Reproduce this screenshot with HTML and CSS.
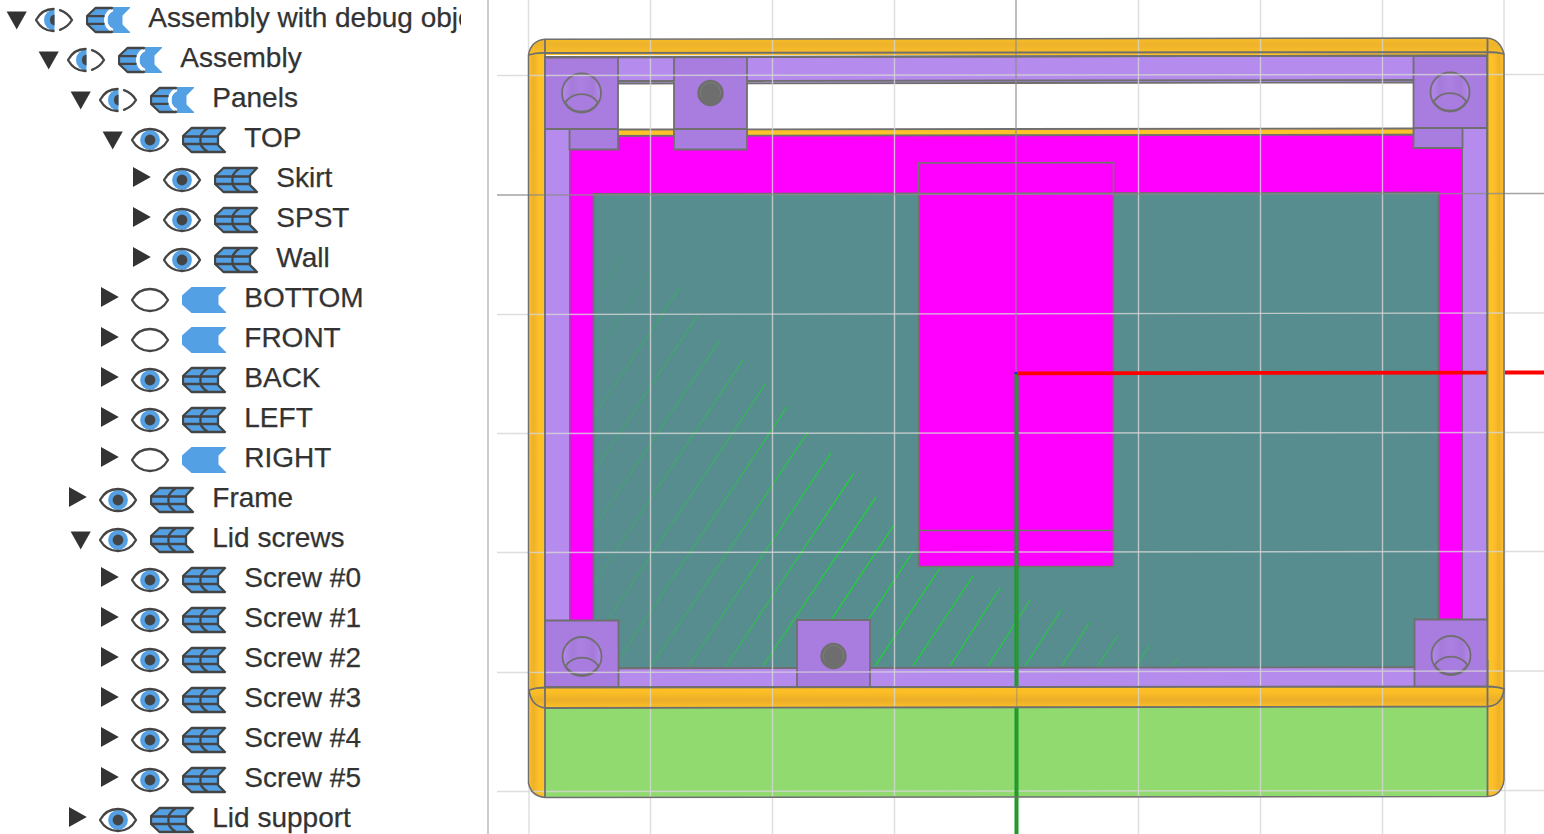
FILE: index.html
```html
<!DOCTYPE html>
<html lang="en">
<head>
<meta charset="utf-8">
<title>Assembly viewer</title>
<link rel="stylesheet" href="styles.css">
</head>
<body>
<svg class="defs" width="0" height="0" aria-hidden="true">
  <symbol id="open" viewBox="0 0 35 40"><path class="ink" d="M6.6 11.6H26.8L16.7 29.4Z"/></symbol>
  <symbol id="closed" viewBox="0 0 35 40"><path class="ink" d="M5 7L22.8 17L5 27Z"/></symbol>
  <symbol id="eye" viewBox="0 0 51 40">
    <circle class="blue" cx="19" cy="20" r="9.9"/><circle class="pupil" cx="19" cy="20" r="5.4"/>
    <path class="line" d="M1 20C5 12.8 11.5 9 19 9S33 12.8 37 20C33 27.2 26.5 31 19 31S5 27.2 1 20Z"/>
  </symbol>
  <symbol id="eye-off" viewBox="0 0 51 40">
    <path class="line" d="M1 20C5 12.8 11.5 9 19 9S33 12.8 37 20C33 27.2 26.5 31 19 31S5 27.2 1 20Z"/>
  </symbol>
  <symbol id="eye-mix" viewBox="0 0 51 40">
    <path class="blue" d="M19.5 9.5A10.5 10.5 0 0 0 19.5 30.5Z"/>
    <path class="pupil" d="M19.5 14.5A5.6 5.6 0 0 0 19.5 25.5Z"/>
    <path class="line" d="M18.6 9C11.5 8.9 5 12.8 1 20C5 27.2 11.5 31.1 18.6 31M25 10.2C30 12 34 15 37 20C34 25 30 28 25 29.8"/>
  </symbol>
  <symbol id="box" viewBox="0 0 62 40">
    <path class="blue" d="M9.5 8H43L36 15.5V25L43 32H9.5L1 24V16Z"/>
    <path class="line" d="M43 8H9.5L1 16V24L9.5 32H43L36 25V15.5ZM1 16.5H36M1 24H36M26 8Q20 12 18.5 16.5V24Q20 28 26 32"/>
  </symbol>
  <symbol id="box-off" viewBox="0 0 62 40"><path class="blue" d="M9.5 7H44V8L36.5 15.5V24.5L44 32V33H9.5L0 24.5V15.5Z"/></symbol>
  <symbol id="box-mix" viewBox="0 0 62 40">
    <path class="blue" d="M9.5 8H25Q18 13 18 20T25 32H9.5L1 24V16Z"/>
    <path class="blue" d="M27 7H44V8L36.5 15.5V24.5L44 32V33H27Q21.5 26 21.5 20T27 7Z"/>
    <path fill="none" stroke="#fff" stroke-width="2" d="M27 10Q20.300 13.500 20.300 20T27 30"/>
    <path class="line" d="M26 8H9.5L1 16V24L9.5 32H26M1 16.2H17.5M1 23.8H17.5"/>
  </symbol>
</svg>
<main class="viewer">
  <nav class="tree">
    <div class="row"><svg class="toggle"><use href="#open"/></svg><svg class="eye"><use href="#eye-mix"/></svg><svg class="box"><use href="#box-mix"/></svg><span class="label">Assembly with debug objects</span></div>
    <div class="row l1"><svg class="toggle"><use href="#open"/></svg><svg class="eye"><use href="#eye-mix"/></svg><svg class="box"><use href="#box-mix"/></svg><span class="label">Assembly</span></div>
    <div class="row l2"><svg class="toggle"><use href="#open"/></svg><svg class="eye"><use href="#eye-mix"/></svg><svg class="box"><use href="#box-mix"/></svg><span class="label">Panels</span></div>
    <div class="row l3"><svg class="toggle"><use href="#open"/></svg><svg class="eye"><use href="#eye"/></svg><svg class="box"><use href="#box"/></svg><span class="label">TOP</span></div>
    <div class="row l4"><svg class="toggle"><use href="#closed"/></svg><svg class="eye"><use href="#eye"/></svg><svg class="box"><use href="#box"/></svg><span class="label">Skirt</span></div>
    <div class="row l4"><svg class="toggle"><use href="#closed"/></svg><svg class="eye"><use href="#eye"/></svg><svg class="box"><use href="#box"/></svg><span class="label">SPST</span></div>
    <div class="row l4"><svg class="toggle"><use href="#closed"/></svg><svg class="eye"><use href="#eye"/></svg><svg class="box"><use href="#box"/></svg><span class="label">Wall</span></div>
    <div class="row l3"><svg class="toggle"><use href="#closed"/></svg><svg class="eye"><use href="#eye-off"/></svg><svg class="box"><use href="#box-off"/></svg><span class="label">BOTTOM</span></div>
    <div class="row l3"><svg class="toggle"><use href="#closed"/></svg><svg class="eye"><use href="#eye-off"/></svg><svg class="box"><use href="#box-off"/></svg><span class="label">FRONT</span></div>
    <div class="row l3"><svg class="toggle"><use href="#closed"/></svg><svg class="eye"><use href="#eye"/></svg><svg class="box"><use href="#box"/></svg><span class="label">BACK</span></div>
    <div class="row l3"><svg class="toggle"><use href="#closed"/></svg><svg class="eye"><use href="#eye"/></svg><svg class="box"><use href="#box"/></svg><span class="label">LEFT</span></div>
    <div class="row l3"><svg class="toggle"><use href="#closed"/></svg><svg class="eye"><use href="#eye-off"/></svg><svg class="box"><use href="#box-off"/></svg><span class="label">RIGHT</span></div>
    <div class="row l2"><svg class="toggle"><use href="#closed"/></svg><svg class="eye"><use href="#eye"/></svg><svg class="box"><use href="#box"/></svg><span class="label">Frame</span></div>
    <div class="row l2"><svg class="toggle"><use href="#open"/></svg><svg class="eye"><use href="#eye"/></svg><svg class="box"><use href="#box"/></svg><span class="label">Lid screws</span></div>
    <div class="row l3"><svg class="toggle"><use href="#closed"/></svg><svg class="eye"><use href="#eye"/></svg><svg class="box"><use href="#box"/></svg><span class="label">Screw #0</span></div>
    <div class="row l3"><svg class="toggle"><use href="#closed"/></svg><svg class="eye"><use href="#eye"/></svg><svg class="box"><use href="#box"/></svg><span class="label">Screw #1</span></div>
    <div class="row l3"><svg class="toggle"><use href="#closed"/></svg><svg class="eye"><use href="#eye"/></svg><svg class="box"><use href="#box"/></svg><span class="label">Screw #2</span></div>
    <div class="row l3"><svg class="toggle"><use href="#closed"/></svg><svg class="eye"><use href="#eye"/></svg><svg class="box"><use href="#box"/></svg><span class="label">Screw #3</span></div>
    <div class="row l3"><svg class="toggle"><use href="#closed"/></svg><svg class="eye"><use href="#eye"/></svg><svg class="box"><use href="#box"/></svg><span class="label">Screw #4</span></div>
    <div class="row l3"><svg class="toggle"><use href="#closed"/></svg><svg class="eye"><use href="#eye"/></svg><svg class="box"><use href="#box"/></svg><span class="label">Screw #5</span></div>
    <div class="row l2"><svg class="toggle"><use href="#closed"/></svg><svg class="eye"><use href="#eye"/></svg><svg class="box"><use href="#box"/></svg><span class="label">Lid support</span></div>
  </nav>
  <svg class="scene" viewBox="489 0 1055 834">
    <defs>
      <linearGradient id="edge-l"><stop offset="0" stop-color="#ffc228"/><stop offset=".3" stop-color="#eeb02a"/><stop offset=".65" stop-color="#fdc026"/><stop offset="1" stop-color="#ffc324"/></linearGradient>
      <linearGradient id="edge-r"><stop offset="0" stop-color="#ffc324"/><stop offset=".35" stop-color="#fdc026"/><stop offset=".7" stop-color="#eeb02a"/><stop offset="1" stop-color="#ffc228"/></linearGradient>
      <linearGradient id="edge-t" x2="0" y2="1"><stop offset="0" stop-color="#f8bb28"/><stop offset=".35" stop-color="#eeb42a"/><stop offset="1" stop-color="#fcc028"/></linearGradient>
      <linearGradient id="edge-b" x2="0" y2="1"><stop offset="0" stop-color="#ffc324"/><stop offset=".3" stop-color="#fabd26"/><stop offset=".65" stop-color="#ebae28"/><stop offset="1" stop-color="#fdc028"/></linearGradient>
      <linearGradient id="bore"><stop offset="0" stop-color="#b489ec"/><stop offset=".25" stop-color="#a57bd9"/><stop offset=".5" stop-color="#ab80e2"/><stop offset=".78" stop-color="#a479d8"/><stop offset="1" stop-color="#b489ec"/></linearGradient>
      <linearGradient id="flicker" gradientUnits="userSpaceOnUse" x1="594" y1="0" x2="1185" y2="0"><stop offset="0" stop-color="#22c83c" stop-opacity=".25"/><stop offset=".2" stop-color="#22c83c" stop-opacity=".55"/><stop offset=".42" stop-color="#10e020" stop-opacity=".95"/><stop offset=".65" stop-color="#10e020" stop-opacity=".85"/><stop offset="1" stop-color="#22c83c" stop-opacity=".5"/></linearGradient>
      <clipPath id="recess"><path d="M595 195H1438V666H595Z"/></clipPath>
      <g id="hole"><circle class="edge" r="19.5" fill="url(#bore)"/><path class="edge dark" d="M-16.5 9.5A20.5 20.5 0 0 1 16.5 9.5A19.5 19.5 0 0 1 -16.5 9.5Z"/></g>
      <g id="screw"><circle r="13.2" fill="#6e6e6e"/><path d="M-9 4A10 10 0 1 1 9 4" fill="none" stroke="#7d7d7d"/></g>
    </defs>

    <path fill="url(#edge-l)" d="M528 55Q530 42 545 39V797Q532 796 528 782Z"/>
    <path fill="url(#edge-r)" d="M1487 38Q1500 39 1504 54V780Q1504 795 1487 797Z"/>
    <path fill="url(#edge-t)" d="M528 56Q530 40 545 39.5L1487 38Q1500 38 1504 54L1487 55H545Z"/>
    <path class="light edge" d="M545 57L1487 55.5V687H545Z"/>
    <path fill="#fff" d="M617 83L1414 82V129H617Z"/>
    <path class="edge" d="M617 81L1414 80M617 83.5L1414 82.5"/>
    <path fill="#ffc12a" d="M617 130L1414 129V135H617Z"/>
    <path class="edge" d="M617 129.5L1414 128.5"/>
    <path class="magenta edge" d="M569.5 136L1462.5 134.5V668H569.5Z"/>
    <path class="teal edge" d="M593.5 194L1438.5 192.5V668H593.5Z"/>
    <g clip-path="url(#recess)" stroke="url(#flicker)" stroke-width="1.2">
      <path opacity=".5" d="M352 666L625 253M390 666L650 272"/>
      <path d="M427 666L679 289M464.5 666L698 315M502 666L719 341M539 666L743 360M577 666L766 383M614 666L787 407M651 666L808 432M688.5 666L831 453M726 666L854 473M763 666L876 497M800.5 666L894 525M838 666L914 550M875 666L940 568M913 666L973 576M950 666L1000 588M988 666L1030 600M1025 666L1061 610M1062 666L1089 623M1098 666L1118 635M1136 666L1149 646M1172 666L1178 658"/>
    </g>
    <path class="magenta edge-green" d="M918.5 163L1113.5 162.5V566.5H918.5ZM918.5 193.5L1113.5 193M918.5 530.5H1113.5"/>
    <path class="light edge" d="M545 668.5L1487 667V687H545Z"/>
    <path class="light" d="M546 130H569V620H546ZM1463 129H1486V620H1463Z"/>
    <path class="dark edge" d="M545 57H618V149.5H569.5V129H545ZM545 129H618M674 57H747V149.5H674ZM674 129H747M1413.5 56H1487V128H1462.5V148H1413.5ZM1413.5 128H1487"/>
    <path class="dark edge" d="M545 620.5H618.5V687H545ZM797 620H870V687H797ZM1414.5 619.5H1487.5V687H1414.5Z"/>
    <use href="#hole" x="581.5" y="93"/><use href="#hole" x="1450" y="92"/><use href="#hole" x="582" y="656.5"/><use href="#hole" x="1451" y="655.5"/>
    <use href="#screw" x="710.5" y="93"/><use href="#screw" x="833.5" y="656"/>
    <path class="lid" d="M545 707L1487 706V797H545Z"/>
    <path fill="url(#edge-r)" d="M1488 60H1504V660H1488Z"/>

    <g class="grid">
      <path d="M528.5 0L529 834M650.5 0V834M772.5 0V834M894.5 0V834M1138.5 0V834M1260.5 0V834M1382.5 0V834M1504 0L1505 834"/>
      <path d="M497 75.5L1544 74.5M497 314.5L1544 313M497 433.5L1544 432.5M497 552.5L1544 551.5M497 672.5L1544 671M497 791.5L1544 790.5"/>
    </g>
    <path class="origin" d="M1016 0V373M497 195L1544 193.5"/>
    <path fill="none" stroke="#0ca516" stroke-width="4" d="M1016.5 373V834"/>
    <path fill="url(#edge-b)" d="M529 690Q536 687.5 545 687.5L1487 686.5Q1500 687 1504 689Q1502 706 1487 706.5L545 707.5Q532 706 529 690Z"/>
    <path class="grid" d="M650.5 688V707M772.5 688V707M894.5 688V707M1138.5 688V707M1260.5 688V707M1382.5 688V707"/>
    <path fill="none" stroke="#777" stroke-opacity=".6" stroke-width=".9" d="M1016.8 375V834"/>
    <path fill="none" stroke="#f00" stroke-width="3.8" d="M1017.5 373.3L1487 372.6M1505 372.5H1544"/>
    <path fill="none" stroke="#2424d0" stroke-width="2" d="M1014.5 373H1017"/>

    <path class="edge" d="M545 39V797M1487.5 38V797M545 57.5L1487 55.5M529 55Q536 52.7 545 53L1487 52Q1497 52 1504 54"/>
    <path class="edge" d="M529 690Q536 687.5 545 687.5L1487 686.5Q1500 687 1504 689Q1502 706 1487 706.5L545 708Q531 706 529 690"/>
    <path class="edge outline" d="M528.5 55Q531 40.5 545 39.3L1487 38Q1500 39 1504 54V780Q1502 796 1487 796.5L545 797.5Q531 796 528.5 783Z"/>
  </svg>
</main>
</body>
</html>
```
FILE: styles.css
```css
* { box-sizing: border-box; }
body { margin: 0; background: #fff; }
.defs { display: block; }
.viewer { display: flex; width: 1544px; height: 834px; overflow: hidden; }
.tree {
  flex: none;
  width: 489px;
  padding-right: 26px;
  border-right: 2px solid #ccc;
  overflow: hidden;
  font: 28px/35px "Liberation Sans", Arial, sans-serif;
  color: #333;
}
.row { display: flex; height: 40px; width: 461px; overflow: hidden; }
.row svg { flex: none; height: 40px; }
.toggle { width: 35px; }
.eye { width: 51px; }
.box { width: 62px; }
.label { flex: 1; min-width: 0; padding-left: 0.3px; overflow: hidden; white-space: nowrap; -webkit-text-stroke: 0.25px #333; }
.l1 { padding-left: 32px; }
.l2 { padding-left: 64px; }
.l3 { padding-left: 96px; }
.l4 { padding-left: 128px; }
.ink { fill: #333; }
.blue { fill: #54a0e5; }
.pupil { fill: #444; }
.line { fill: none; stroke: #444; stroke-width: 2.3; stroke-linejoin: round; stroke-linecap: round; }
.scene { flex: none; width: 1055px; height: 834px; }
.edge { stroke: #706f70; stroke-width: 1.8; }
.edge-green { stroke: #6d7a66; stroke-width: 1.6; }
.outline { fill: none; stroke-width: 1.5; }
.light { fill: #b68bee; }
.dark { fill: #a97ce0; }
.magenta { fill: #f0f; }
.teal { fill: #588d8f; }
.lid { fill: #91da70; }
path.edge:not([class*=" "]) { fill: none; }
.grid { fill: none; stroke: #d6d6d6; stroke-opacity: .8; stroke-width: 1.4; }
.origin { fill: none; stroke: #8c8c8c; stroke-opacity: .8; stroke-width: 1.4; }
```
